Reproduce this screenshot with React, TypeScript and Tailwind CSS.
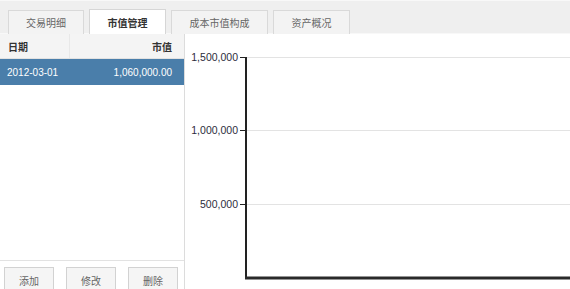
import React from 'react'

const tabs = [
  { label: '交易明细', w: 'w-[76px]', active: false },
  { label: '市值管理', w: 'w-[77px]', active: true },
  { label: '成本市值构成', w: 'w-[97px]', active: false },
  { label: '资产概况', w: 'w-[77px]', active: false },
]

const ticks = [
  { label: '1,500,000', y: 23 },
  { label: '1,000,000', y: 96 },
  { label: '500,000', y: 170 },
]

const cjk = { fontFamily: '"Noto Sans CJK SC", sans-serif' }

export default function App() {
  return (
    <div
      className="w-[570px] h-[289px] overflow-hidden bg-white flex flex-col text-[10px] text-[#333]"
      style={{ fontFamily: '"Liberation Sans", "Noto Sans CJK SC", sans-serif' }}
    >
      {/* Tabs */}
      <div className="h-[34px] shrink-0 bg-[#efefef] border-t border-[#f8f8f8] border-b border-[#d6d6d6] flex items-end pl-[8px] gap-[5px]">
        {tabs.map((t) => (
          <div
            key={t.label}
            className={`${t.w} flex items-center justify-center border border-b-0 -mb-px ${
              t.active
                ? 'bg-white border-[#d6d6d6] h-[25px] font-bold text-[#333]'
                : 'bg-[#f3f3f3] border-[#d9d9d9] h-[24px] text-[#666]'
            }`}
            style={cjk}
          >
            {t.label}
          </div>
        ))}
      </div>

      <div className="flex flex-1 min-h-0">
        {/* Left list */}
        <div className="w-[185px] shrink-0 border-r border-[#dcdcdc] flex flex-col">
          <div className="h-[25px] shrink-0 flex bg-[#f4f4f4] border-b border-[#e2e2e2] font-bold text-[#333]" style={cjk}>
            <div className="w-[70px] border-r border-[#e8e8e8] flex items-center pl-[8px]">日期</div>
            <div className="flex-1 flex items-center justify-end pr-[12px]">市值</div>
          </div>
          <div className="h-[26px] shrink-0 flex items-center justify-between bg-[#4a7eaa] text-white text-[10px] pl-[7px] pr-[12px]">
            <span>2012-03-01</span>
            <span>1,060,000.00</span>
          </div>
          <div className="flex-1" />
          <div className="h-[29px] shrink-0 border-t border-[#e2e2e2] flex gap-[12px] pl-[4px] pt-[6px]">
            {['添加', '修改', '删除'].map((b) => (
              <div
                key={b}
                className="w-[50px] h-[26px] border border-[#d2d2d2] bg-[#f5f5f5] flex items-center justify-center text-[#666]"
                style={cjk}
              >
                {b}
              </div>
            ))}
          </div>
        </div>

        {/* Chart */}
        <div className="flex-1 min-w-0">
          <svg width="385" height="255" className="block">
            {ticks.map((t) => (
              <g key={t.label}>
                <line x1="61" x2="385" y1={t.y + 0.5} y2={t.y + 0.5} stroke="#e3e3e3" />
                <line x1="55" x2="61" y1={t.y + 0.5} y2={t.y + 0.5} stroke="#222" />
                <text
                  x="53"
                  y={t.y + 4}
                  textAnchor="end"
                  fontSize="10.5"
                  fill="#2c2c3c"
                  fontFamily="Liberation Sans, sans-serif"
                >
                  {t.label}
                </text>
              </g>
            ))}
            <line x1="61" x2="61" y1="23" y2="245" stroke="#222" strokeWidth="2" />
            <line x1="60" x2="385" y1="244" y2="244" stroke="#2a2a2a" strokeWidth="3" />
          </svg>
        </div>
      </div>
    </div>
  )
}
